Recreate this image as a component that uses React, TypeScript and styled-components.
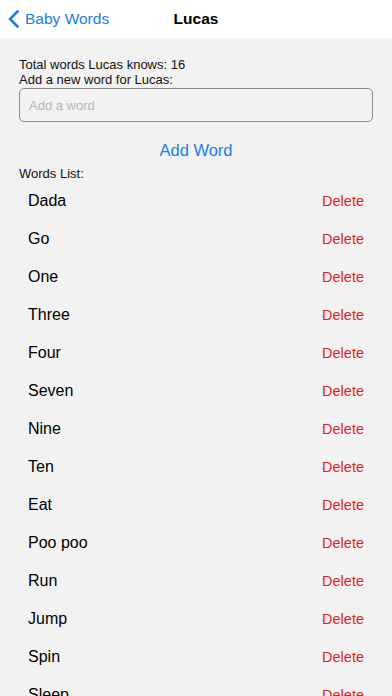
import styled, { createGlobalStyle } from 'styled-components';

const GlobalStyle = createGlobalStyle`
  html, body {
    margin: 0;
    padding: 0;
    background: #f2f2f2;
    font-family: 'Liberation Sans', Arial, sans-serif;
    -webkit-font-smoothing: antialiased;
  }
`;

const Screen = styled.div`
  width: 392px;
  height: 696px;
  overflow: hidden;
  background: #f2f2f2;
`;

const NavBar = styled.div`
  height: 38px;
  background: #ffffff;
  display: flex;
  align-items: center;
  justify-content: center;
  position: relative;
`;

const BackButton = styled.button`
  position: absolute;
  left: 8px;
  top: 0;
  height: 38px;
  display: flex;
  align-items: center;
  gap: 6px;
  border: none;
  background: none;
  padding: 0;
  color: #1a7ee6;
  font-family: inherit;
  font-size: 15.5px;
`;

const Title = styled.span`
  font-size: 15.5px;
  font-weight: 700;
  color: #000;
`;

const Content = styled.div`
  padding: 19px 19px 0 19px;
`;

const Label = styled.div`
  font-size: 13px;
  line-height: 15px;
  color: #111;
`;

const WordInput = styled.input`
  box-sizing: border-box;
  width: 100%;
  height: 34px;
  margin-top: 1px;
  border: 1px solid #8e8e8e;
  border-radius: 5px;
  background: #f2f2f2;
  padding: 0 9px;
  font-family: inherit;
  font-size: 13px;
  outline: none;
  &::placeholder {
    color: #b8b8b8;
  }
`;

const AddButton = styled.button`
  display: block;
  margin: 17px auto 0;
  border: none;
  background: none;
  color: #1a7ee6;
  font-family: inherit;
  font-size: 16.5px;
  padding: 0;
  height: 22px;
`;

const ListLabel = styled(Label)`
  margin-top: 5px;
`;

const List = styled.div`
  margin-top: 1px;
`;

const Row = styled.div`
  height: 38px;
  display: flex;
  align-items: center;
  justify-content: space-between;
  padding: 0 9px;
`;

const Word = styled.span`
  font-size: 16px;
  color: #000;
`;

const DeleteButton = styled.button`
  border: none;
  background: none;
  padding: 0;
  color: #e02424;
  font-family: inherit;
  font-size: 14.5px;
`;

const words = [
  'Dada',
  'Go',
  'One',
  'Three',
  'Four',
  'Seven',
  'Nine',
  'Ten',
  'Eat',
  'Poo poo',
  'Run',
  'Jump',
  'Spin',
  'Sleep',
];

const App = () => {
  return (
    <Screen>
      <GlobalStyle />
      <NavBar>
        <BackButton>
          <svg width="11" height="18" viewBox="0 0 11 18">
            <path
              d="M9.5 1.5 L2 9 L9.5 16.5"
              fill="none"
              stroke="#1a7ee6"
              strokeWidth="2.6"
              strokeLinecap="round"
              strokeLinejoin="round"
            />
          </svg>
          Baby Words
        </BackButton>
        <Title>Lucas</Title>
      </NavBar>
      <Content>
        <Label>Total words Lucas knows: 16</Label>
        <Label>Add a new word for Lucas:</Label>
        <WordInput placeholder="Add a word" />
        <AddButton>Add Word</AddButton>
        <ListLabel>Words List:</ListLabel>
        <List>
          {words.map((w) => (
            <Row key={w}>
              <Word>{w}</Word>
              <DeleteButton>Delete</DeleteButton>
            </Row>
          ))}
        </List>
      </Content>
    </Screen>
  );
};

export default App;
